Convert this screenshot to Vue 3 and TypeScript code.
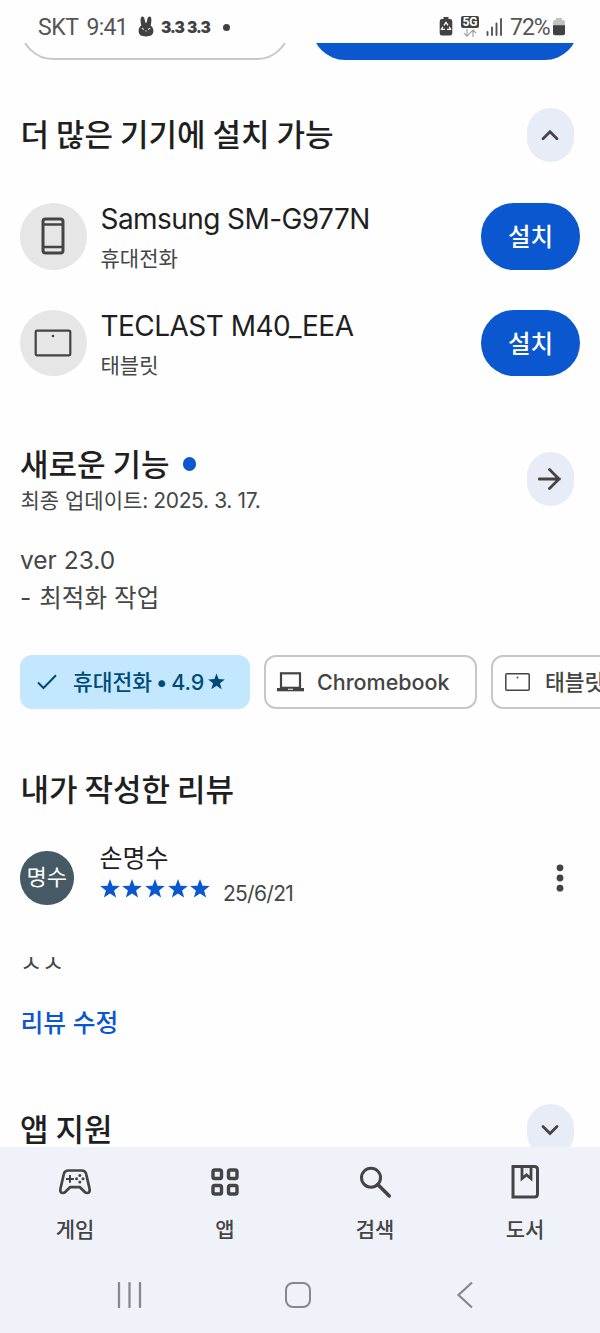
<script setup lang="ts">
interface Device {
  name: string
  kind: string
  icon: 'phone' | 'tablet'
  cls: string
}

const devices: Device[] = [
  { name: 'Samsung SM-G977N', kind: '휴대전화', icon: 'phone', cls: 'samsung' },
  { name: 'TECLAST M40_EEA', kind: '태블릿', icon: 'tablet', cls: 'teclast' },
]

const starPath =
  'M10 0 L12.5 6.7 L19.8 7 L14.1 11.5 L16.1 18.5 L10 14.5 L3.9 18.5 L5.9 11.5 L0.2 7 L7.5 6.7 Z'
</script>

<template>
  <div class="screen">
    <header class="status">
      <span class="carrier">SKT</span>
      <span class="clock">9:41</span>
      <svg class="rabbit" width="16" height="21" viewBox="0 0 16 21">
        <path
          fill="#414141"
          d="M3.300 9.500C2.500 6.500 2 1.200 4 .6 6 .1 6.900 3.200 7.200 6.500h1.600C9.100 3.200 10 .1 12 .6c2 .6 1.500 5.900.7 8.900 2 1.500 2.700 3.400 2.700 5.600 0 3.800-3 5.400-7.400 5.400S.6 18.900.6 15.100c0-2.200.7-4.100 2.700-5.600z"
        />
        <path d="M3.800 12.200l2.200 1.200M12.200 12.200L10 13.400" stroke="#ddd" stroke-width="1.100" />
        <circle cx="8" cy="15" r=".8" fill="#bbb" />
      </svg>
      <span class="alert">3.3 3.3</span>
      <i class="dot"></i>
      <span class="grow"></span>
      <svg class="saver" width="14" height="19" viewBox="0 0 14 19">
        <path fill="#414141" d="M4.500 0h5v2H11q2.300 0 2.300 2.300v11.900q0 2.300-2.300 2.300H3Q.7 18.500.7 16.200V4.300Q.7 2 3 2h1.500z" />
        <path
          d="M5 8.300L7 5.300l2 3M10.300 9.800l1.200 2.600H8M6 12.400H2.500l1.300-2.700"
          fill="none"
          stroke="#fff"
          stroke-width="1.300"
        />
      </svg>
      <span class="fiveg">
        <span class="badge">5G</span>
        <svg width="14" height="8" viewBox="0 0 14 8">
          <path
            d="M4 0v7M1 4.200l3 3 3-3M10 8V1M7 4l3-3 3 3"
            fill="none"
            stroke="#a3a3a3"
            stroke-width="1.200"
          />
        </svg>
      </span>
      <svg class="signal" width="17" height="18" viewBox="0 0 17 18">
        <path d="M1.500 17v-3M6 17V9.500M10.500 17V5.500M15 17V1" stroke="#555" stroke-width="1.900" stroke-linecap="round" />
      </svg>
      <span class="percent">72%</span>
      <svg class="battery" width="12" height="18" viewBox="0 0 12 18">
        <path fill="#c2c2c2" d="M3 0h6v2h1q2 0 2 2v4H0V4q0-2 2-2h1z" />
        <path fill="#414141" d="M0 7.300h12v8q0 2-2 2H2q-2 0-2-2z" />
      </svg>
    </header>

    <main class="content">
      <div class="actions">
        <div class="action outlined"></div>
        <div class="action filled"></div>
      </div>

      <section class="row more">
        <h2>더 많은 기기에 설치 가능</h2>
        <button class="round">
          <svg width="18" height="12" viewBox="0 0 18 12"><path class="chev" d="M2 9.700l7-7 7 7" /></svg>
        </button>
      </section>

      <section class="devices">
        <div v-for="d in devices" :key="d.name" class="device">
          <div class="device-icon">
            <svg v-if="d.icon === 'phone'" width="24" height="38" viewBox="0 0 24 38">
              <rect x="2" y="2" width="20" height="34" rx="2.500" fill="none" stroke="#444" stroke-width="3" />
              <path d="M2 7.500h20M2 30h20" stroke="#444" stroke-width="2.700" />
            </svg>
            <svg v-else width="38" height="28" viewBox="0 0 38 28">
              <rect x="1.700" y="1.700" width="34.600" height="24.600" rx="1.500" fill="none" stroke="#444" stroke-width="2.200" />
              <circle cx="19" cy="7" r="1.300" fill="#444" />
            </svg>
          </div>
          <div class="device-text">
            <div class="device-name"><span :class="d.cls">{{ d.name }}</span></div>
            <div class="device-kind">{{ d.kind }}</div>
          </div>
          <button class="install">설치</button>
        </div>
      </section>

      <section class="row news">
        <div class="news-text">
          <h2>새로운 기능<i class="new-dot"></i></h2>
          <div class="updated">최종 업데이트: <span>2025. 3. 17.</span></div>
        </div>
        <button class="round">
          <svg width="24" height="22" viewBox="0 0 24 22">
            <path class="arrow" d="M1 11h20.500M11.500 1.500l9.500 9.500-9.500 9.500" />
          </svg>
        </button>
      </section>

      <p class="changelog"><span class="ver">ver 23.0</span><br />- <span class="opt">최적화 작업</span></p>

      <nav class="chips">
        <div class="chip selected">
          <svg width="20" height="16" viewBox="0 0 20 16"><path d="M1 8.500l5.500 5.500L19 1.200" fill="none" stroke="#004a77" stroke-width="2" /></svg>
          <span class="c1">휴대전화<i class="sep">•</i><span class="score">4.9</span></span>
          <svg class="chip-star" width="17" height="17" viewBox="0 0 20 19"><path :d="starPath" fill="#004a77" /></svg>
        </div>
        <div class="chip chrome">
          <svg width="27" height="20" viewBox="0 0 27 20">
            <rect x="4" y="1.300" width="19" height="14.500" fill="none" stroke="#444" stroke-width="2.200" />
            <path d="M0 16h27v3.300H0z" fill="#444" />
            <path d="M11 17.300h5" stroke="#ddd" stroke-width="1.200" />
          </svg>
          <span class="c2">Chromebook</span>
        </div>
        <div class="chip tab">
          <svg width="25" height="18" viewBox="0 0 25 18">
            <rect x=".8" y=".8" width="23.400" height="16.400" rx="1" fill="none" stroke="#444" stroke-width="1.500" />
            <circle cx="12.500" cy="4.500" r=".9" fill="#444" />
          </svg>
          <span class="c3">태블릿</span>
        </div>
      </nav>

      <section class="review">
        <h2>내가 작성한 리뷰</h2>
        <div class="reviewer">
          <div class="avatar">명수</div>
          <div class="who">
            <div class="name">손명수</div>
            <div class="rating">
              <svg v-for="n in 5" :key="n" width="20" height="19" viewBox="0 0 20 19"><path :d="starPath" fill="#0b57d0" /></svg>
              <span class="date">25/6/21</span>
            </div>
          </div>
          <svg class="menu" width="8" height="28" viewBox="0 0 8 28">
            <circle v-for="y in [3.8, 14, 24.2]" :key="y" cx="4" :cy="y" r="3.400" fill="#444" />
          </svg>
        </div>
        <p class="comment">ㅅㅅ</p>
        <a class="edit">리뷰 수정</a>
      </section>

      <section class="row support">
        <h2>앱 지원</h2>
        <button class="round">
          <svg width="18" height="12" viewBox="0 0 18 12"><path class="chev" d="M2 2.500l7 7 7-7" /></svg>
        </button>
      </section>
    </main>

    <footer class="bottom">
      <nav class="tabs">
        <div class="tab-item">
          <svg width="36" height="36" viewBox="0 0 36 36">
            <path
              d="M11.500 6.500h13q4 0 4.800 4l3.200 14q.8 4.500-2.300 4.500-1.500 0-2.500-1l-4.700-4.800h-10L8.300 28q-1 1-2.500 1-3.100 0-2.300-4.500l3.200-14q.8-4 4.800-4z"
              fill="none"
              stroke="#444"
              stroke-width="2.700"
              stroke-linejoin="round"
            />
            <path d="M13 11v7.800M9 14.900h7.900" stroke="#444" stroke-width="2" />
            <g fill="#444">
              <circle cx="22.800" cy="11.600" r="1.500" /><circle cx="22.800" cy="18" r="1.500" />
              <circle cx="19.600" cy="14.800" r="1.500" /><circle cx="26" cy="14.800" r="1.500" />
            </g>
          </svg>
          <span>게임</span>
        </div>
        <div class="tab-item">
          <svg width="36" height="36" viewBox="0 0 36 36" fill="none" stroke="#444" stroke-width="3.400">
            <rect x="6" y="6" width="8.500" height="8.500" rx="1.800" /><rect x="21.500" y="6" width="8.500" height="8.500" rx="1.800" />
            <rect x="6" y="21.500" width="8.500" height="8.500" rx="1.800" /><rect x="21.500" y="21.500" width="8.500" height="8.500" rx="1.800" />
          </svg>
          <span>앱</span>
        </div>
        <div class="tab-item">
          <svg width="36" height="36" viewBox="0 0 36 36" fill="none" stroke="#444" stroke-width="3">
            <circle cx="14" cy="13.700" r="9.500" /><path d="M20.800 20.500l11.500 11.500" stroke-width="3.500" stroke-linecap="round" />
          </svg>
          <span>검색</span>
        </div>
        <div class="tab-item">
          <svg width="36" height="36" viewBox="0 0 36 36" fill="none" stroke="#444" stroke-width="3">
            <path d="M6 2.500h21.500q3 0 3 3v24.500q0 3-3 3H6z" />
            <path d="M15 3v11.500l4.500-3.700 4.500 3.700V3" stroke-width="2.800" />
            <path d="M17 3.500h1.500v3.500h2V3.500H22" stroke-width=".1" />
          </svg>
          <span>도서</span>
        </div>
      </nav>
      <div class="system">
        <svg width="26" height="26" viewBox="0 0 26 26"><path d="M2 1v24M12.500 1v24M23 1v24" stroke="#85888d" stroke-width="2.300" stroke-linecap="round" /></svg>
        <svg class="home" width="28" height="28" viewBox="0 0 28 28"><rect x="2" y="2" width="24" height="24" rx="7" fill="none" stroke="#85888d" stroke-width="2" /></svg>
        <svg width="18" height="28" viewBox="0 0 18 28"><path d="M16 1.500L2.500 14 16 26.500" fill="none" stroke="#85888d" stroke-width="2.200" /></svg>
      </div>
    </footer>
  </div>
</template>

<style>
html,
body {
  background: #fefefe;
}
</style>

<style scoped>
* {
  box-sizing: border-box;
}
svg {
  display: block;
  flex: none;
}
.screen {
  width: 600px;
  height: 1333px;
  display: flex;
  flex-direction: column;
  overflow: hidden;
  background: #fefefe;
  color: #1f1f1f;
  font-family: Inter, 'Noto Sans CJK KR', sans-serif;
  white-space: nowrap;
}
h2,
p {
  margin: 0;
}
h2 {
  padding-left: 0.500px;
  font-size: 31px;
  font-weight: 500;
  line-height: 44px;
  font-family: 'Noto Sans CJK KR', sans-serif;
}
button {
  border: 0;
  padding: 0;
  font: inherit;
}
.status {
  height: 43px;
  flex: none;
  display: flex;
  align-items: center;
  padding: 12px 35px 0 38px;
  font: 400 23px/32px Roboto, sans-serif;
  color: #555;
}
.carrier {
  width: 48.500px;
  letter-spacing: -0.4px;
}
.clock {
  width: 51.500px;
  letter-spacing: -0.8px;
}
.rabbit {
  margin-top: -2px;
}
.alert {
  margin-left: 7px;
  width: 62px;
  font: 900 15.500px/32px Inter, sans-serif;
  letter-spacing: -1px;
  word-spacing: 1px;
  color: #414141;
}
.dot {
  width: 7px;
  height: 7px;
  margin-top: -1px;
  border-radius: 50%;
  background: #414141;
}
.grow {
  flex: 1;
}
.saver {
  margin-top: -2px;
}
.fiveg {
  display: flex;
  flex-direction: column;
  align-items: center;
  gap: 1px;
  margin: -3px 7px 0 8px;
}
.badge {
  width: 18px;
  height: 12px;
  border-radius: 2px;
  background: #414141;
  color: #fff;
  text-align: center;
  font: 700 12px/12px Roboto, sans-serif;
}
.signal {
  margin-top: -2px;
}
.percent {
  margin-left: 7px;
  width: 43px;
  letter-spacing: -1px;
}
.battery {
  margin-top: -2px;
}
.content {
  flex: none;
  height: 1103.500px;
  overflow: hidden;
}
.actions {
  height: 17px;
  padding: 0 22px 0 20px;
  display: flex;
  gap: 22px;
  align-items: flex-end;
  overflow: hidden;
}
.action {
  flex: 1;
  height: 66px;
  border-radius: 33px;
}
.outlined {
  border: 2px solid #c7c7c7;
}
.filled {
  background: #0b57d0;
}
.row {
  display: flex;
  justify-content: space-between;
  padding: 0 26.500px 0 20px;
}
.round {
  width: 47px;
  height: 53.500px;
  border-radius: 23.500px;
  background: #e8ecf6;
  display: flex;
  align-items: center;
  justify-content: center;
}
.chev,
.arrow {
  fill: none;
  stroke: #444;
  stroke-width: 2.800;
  stroke-linecap: round;
}
.more {
  margin-top: 48px;
  height: 95px;
}
.more h2 {
  padding-top: 3px;
}
.devices {
  padding: 0 20px;
  display: flex;
  flex-direction: column;
  gap: 40px;
}
.device {
  display: flex;
  align-items: center;
  height: 66.500px;
}
.device-icon {
  width: 66.500px;
  height: 66.500px;
  border-radius: 50%;
  background: #e6e6e6;
  display: flex;
  align-items: center;
  justify-content: center;
}
.device-text {
  flex: 1;
  padding: 7px 0 0 14px;
}
.device-name {
  font-size: 28px;
  line-height: 38px;
}
.samsung {
  letter-spacing: -0.570px;
}
.teclast {
  letter-spacing: -0.530px;
}
.device-kind {
  font-size: 21px;
  line-height: 41px;
  color: #444746;
}
.install {
  width: 99px;
  height: 66.500px;
  padding-bottom: 1px;
  border-radius: 33px;
  background: #0b57d0;
  color: #fff;
  font-size: 24.500px;
  font-weight: 500;
  font-family: 'Noto Sans CJK KR', sans-serif;
}
.news {
  margin-top: 76px;
  height: 90px;
}
.news h2 {
  margin-top: -11px;
  margin-bottom: 2px;
  padding-left: 0;
  display: flex;
  align-items: center;
}
.new-dot {
  width: 13.500px;
  height: 13.500px;
  margin: 2px 0 0 13px;
  border-radius: 50%;
  background: #0b57d0;
}
.updated {
  padding-left: 0.500px;
  font-size: 21px;
  line-height: 28px;
  color: #444746;
}
.updated span {
  margin-left: -1px;
  letter-spacing: -0.350px;
}
.changelog {
  padding-left: 20px;
  height: 113px;
  font-size: 24.500px;
  line-height: 37.500px;
  color: #444746;
}
.opt {
  margin-left: 1px;
  letter-spacing: 0.100px;
}
.chips {
  display: flex;
  gap: 14px;
  padding-left: 20px;
}
.chip {
  flex: none;
  height: 53.500px;
  border: 2px solid #c7c7c7;
  border-radius: 12px;
  display: flex;
  align-items: center;
  padding-left: 11px;
  font-size: 21.500px;
  line-height: 30px;
  font-weight: 500;
  color: #444;
}
.selected {
  width: 230px;
  background: #c2e7ff;
  border-color: #c2e7ff;
  color: #004a77;
  padding-left: 15px;
}
.c1 {
  margin-left: 16px;
  width: 135px;
  display: flex;
}
.sep {
  width: 19px;
  text-align: center;
  font-style: normal;
}
.chrome {
  width: 213px;
}
.c2 {
  margin-left: 13px;
}
.tab {
  width: 150px;
  padding-left: 12px;
}
.c3 {
  margin-left: 15px;
}
.review {
  height: 395.500px;
  padding: 57.500px 20px 0;
}
.reviewer {
  height: 54px;
  margin-top: 41px;
  display: flex;
  align-items: center;
}
.avatar {
  width: 53.500px;
  height: 53.500px;
  border-radius: 50%;
  background: #455a64;
  color: #fff;
  text-align: center;
  font-size: 22px;
  line-height: 53px;
}
.who {
  flex: 1;
  padding-left: 26px;
  margin-top: -10px;
}
.name {
  font-size: 25px;
  line-height: 34px;
}
.rating {
  display: flex;
  gap: 2.700px;
  height: 30px;
  padding-top: 4px;
}
.date {
  margin-left: 10px;
  font-size: 21px;
  line-height: 30px;
  letter-spacing: -0.700px;
  color: #444746;
}
.menu {
  margin-right: 16px;
}
.comment {
  margin-top: 40.500px;
  font-size: 24px;
  line-height: 36px;
  color: #444746;
}
.edit {
  display: block;
  margin-top: 23px;
  padding-left: 0.500px;
  font-size: 24.800px;
  line-height: 36px;
  font-weight: 500;
  color: #0b57d0;
}
.support {
  margin-top: -0.500px;
}
.support h2 {
  padding: 2px 0 0;
}
.bottom {
  flex: 1;
  background: #eff2f8;
}
.tabs {
  display: grid;
  grid-template-columns: repeat(4, 1fr);
  padding-top: 17px;
}
.tab-item {
  display: flex;
  flex-direction: column;
  align-items: center;
  font-size: 21px;
  line-height: 30px;
  font-weight: 500;
  color: #444;
  gap: 15px;
}
.system {
  display: flex;
  justify-content: space-between;
  align-items: center;
  height: 100px;
  padding: 0 126px 0 117px;
}
.home {
  margin-right: 4px;
}
</style>
